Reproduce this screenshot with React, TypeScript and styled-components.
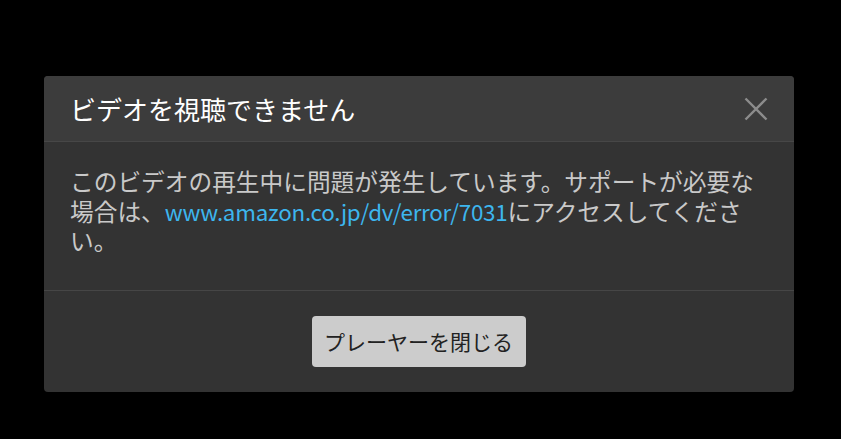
import styled, { createGlobalStyle } from 'styled-components';

const GlobalStyle = createGlobalStyle`
  html, body {
    margin: 0;
    padding: 0;
    background: #000;
    font-family: "Noto Sans CJK JP", "Noto Sans", sans-serif;
  }
`;

const Page = styled.div`
  width: 841px;
  height: 439px;
  padding: 76px 0 0 44px;
  box-sizing: border-box;
`;

const Dialog = styled.div`
  width: 750px;
  height: 316px;
  background: #333333;
  border-radius: 4px;
  overflow: hidden;
  display: flex;
  flex-direction: column;
`;

const Header = styled.header`
  height: 65px;
  background: #3c3c3c;
  border-bottom: 1px solid #474747;
  display: flex;
  align-items: center;
  justify-content: space-between;
  padding: 0 24px 0 26px;
`;

const Title = styled.h1`
  margin: 0;
  font-size: 26px;
  font-weight: 400;
  color: #ffffff;
  line-height: 1;
`;

const CloseButton = styled.button`
  background: none;
  border: none;
  padding: 0;
  width: 28px;
  height: 28px;
  display: flex;
  align-items: center;
  justify-content: center;
  cursor: pointer;
`;

const Body = styled.div`
  padding: 25px 26px 34px;
  border-bottom: 1px solid #464646;
`;

const Message = styled.p`
  margin: 0;
  font-size: 23.7px;
  line-height: 29.5px;
  color: #c9c9c9;
`;

const ErrorLink = styled.a`
  color: #3db6ee;
  text-decoration: none;
  font-size: 22.4px;
  letter-spacing: -0.25px;
`;

const Footer = styled.footer`
  flex: 1;
  display: flex;
  justify-content: center;
  align-items: flex-start;
  padding-top: 25px;
`;

const PrimaryButton = styled.button`
  height: 51px;
  padding: 0 13px 0 12px;
  background: #cccccc;
  color: #222222;
  border: none;
  border-radius: 4px;
  font-family: inherit;
  font-size: 21px;
  cursor: pointer;
`;

export default function App() {
  return (
    <>
      <GlobalStyle />
      <Page>
        <Dialog>
          <Header>
            <Title>ビデオを視聴できません</Title>
            <CloseButton aria-label="閉じる">
              <svg width="24" height="24" viewBox="0 0 24 24">
                <path d="M1.5 1.5 L22.5 22.5 M22.5 1.5 L1.5 22.5" stroke="#8c8c8c" strokeWidth="2.4" />
              </svg>
            </CloseButton>
          </Header>
          <Body>
            <Message>
              このビデオの再生中に問題が発生しています。サポートが必要な場合は、
              <ErrorLink href="#">www.amazon.co.jp/dv/error/7031</ErrorLink>
              にアクセスしてください。
            </Message>
          </Body>
          <Footer>
            <PrimaryButton>プレーヤーを閉じる</PrimaryButton>
          </Footer>
        </Dialog>
      </Page>
    </>
  );
}
